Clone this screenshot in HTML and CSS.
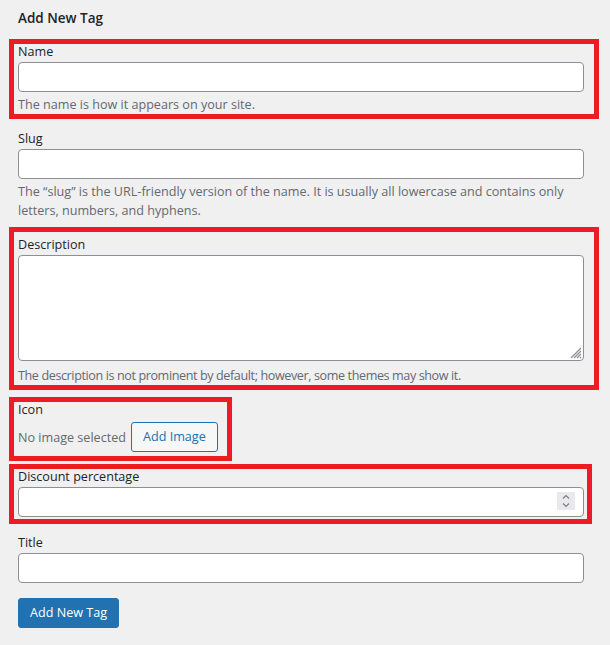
FILE: index.html
```html
<!DOCTYPE html>
<html lang="en">
<head>
<meta charset="utf-8">
<title>Add New Tag</title>
<link rel="stylesheet" href="styles.css">
</head>
<body>
<div class="form-wrap">
  <h2 class="form-title">Add New Tag</h2>
  <form class="tag-form">
    <div class="form-field mark mark-wide field-name">
      <label for="tag-name">Name</label>
      <input type="text" id="tag-name" class="text-input">
      <p class="description">The name is how it appears on your site.</p>
    </div>

    <div class="form-field field-slug">
      <label for="tag-slug">Slug</label>
      <input type="text" id="tag-slug" class="text-input">
      <p class="description">The “slug” is the URL-friendly version of the name. It is usually all lowercase and contains only letters, numbers, and hyphens.</p>
    </div>

    <div class="form-field mark mark-wide field-desc">
      <label for="tag-description">Description</label>
      <div class="textarea-wrap">
        <textarea id="tag-description" class="text-area"></textarea>
        <svg class="grip" width="14" height="14" viewBox="0 0 14 14" aria-hidden="true">
          <path d="M13 3 L3 13 M13 6 L6 13 M13 9 L9 13 M13 12 L12 13" stroke="#8c8f94" stroke-width="1.3" fill="none"/>
        </svg>
      </div>
      <p class="description description-desc">The description is not prominent by default; however, some themes may show it.</p>
    </div>

    <div class="form-field mark mark-icon field-icon">
      <label>Icon</label>
      <div class="image-row">
        <span class="no-image">No image selected</span>
        <button type="button" class="button button-secondary">Add Image</button>
      </div>
    </div>

    <div class="form-field mark mark-num field-discount">
      <label for="tag-discount">Discount percentage</label>
      <div class="number-wrap">
        <input type="text" id="tag-discount" class="text-input">
        <span class="spin" aria-hidden="true">
          <svg width="18" height="18" viewBox="0 0 18 18">
            <path d="M6 6.5 L9 3.5 L12 6.5 M6 11.5 L9 14.5 L12 11.5" stroke="#7a7a80" stroke-width="1.1" fill="none"/>
          </svg>
        </span>
      </div>
    </div>

    <div class="form-field field-title">
      <label for="tag-title">Title</label>
      <input type="text" id="tag-title" class="text-input">
    </div>

    <div class="submit-row">
      <button type="submit" class="button button-primary">Add New Tag</button>
    </div>
  </form>
</div>
</body>
</html>
```

FILE: styles.css
```css
html, body {
  margin: 0;
  padding: 0;
}

body {
  background: #f0f0f1;
  color: #1d2327;
  font-family: "Open Sans", "Noto Sans", sans-serif;
  font-size: 12.6px;
}

.form-wrap {
  padding: 8px 26px 20px 18px;
}

.form-title {
  margin: 0;
  font-size: 13.5px;
  font-weight: 600;
  line-height: 20px;
  color: #1d2327;
}

/* Fields */
.form-field label {
  display: block;
  line-height: 15px;
  margin-bottom: 3px;
  color: #1d2327;
}

.text-input {
  display: block;
  box-sizing: border-box;
  width: 100%;
  height: 30px;
  margin: 0;
  padding: 0 8px;
  background: #fff;
  border: 1px solid #8c8f94;
  border-radius: 4px;
  font: inherit;
  color: #2c3338;
}

.description {
  margin: 3px 0 0;
  line-height: 19px;
  color: #646970;
}

.textarea-wrap {
  position: relative;
}

.text-area {
  display: block;
  box-sizing: border-box;
  width: 100%;
  height: 106px;
  margin: 0;
  padding: 2px 6px;
  background: #fff;
  border: 1px solid #8c8f94;
  border-radius: 4px;
  resize: none;
  font: inherit;
}

.grip {
  position: absolute;
  right: 2px;
  bottom: 2px;
}

.description-desc {
  margin-top: 5px;
  letter-spacing: -0.4px;
}

/* Red highlight frames around selected fields */
.mark {
  border: 5px solid #ed1c24;
  margin-left: -9px;
  padding-left: 4px;
}

.mark-wide {
  margin-right: -15px;
  padding-right: 10px;
}

.mark-num {
  margin-right: -8px;
  padding-right: 3px;
}

.mark-icon {
  box-sizing: border-box;
  width: 223px;
  padding-right: 9px;
}

/* Vertical rhythm */
.field-name {
  margin-top: 11px;
}

.field-slug {
  margin-top: 12px;
}

.field-desc {
  margin-top: 7px;
  padding-top: 5px;
}

.field-icon {
  margin-top: 7px;
  padding-bottom: 4px;
}

.field-icon label {
  margin-bottom: 5px;
}

.field-discount {
  margin-top: 3px;
  padding-bottom: 2px;
}

.field-title {
  margin-top: 11px;
}

/* Icon picker row */
.image-row {
  display: flex;
  align-items: center;
  gap: 5px;
}

.no-image {
  color: #646970;
}

/* Number field spinner */
.number-wrap {
  position: relative;
}

.spin {
  position: absolute;
  top: 5px;
  right: 9px;
  width: 18px;
  height: 18px;
  background: #e9e9ed;
  display: block;
}

.spin svg {
  display: block;
}

/* Buttons */
.button {
  box-sizing: border-box;
  height: 30px;
  margin: 0;
  padding: 0 11px;
  border-radius: 3px;
  font: inherit;
  line-height: 28px;
  cursor: pointer;
}

.button-secondary {
  color: #2271b1;
  background: #f6f7f7;
  border: 1px solid #2271b1;
}

.button-primary {
  color: #fff;
  background: #2271b1;
  border: 1px solid #2271b1;
}

.submit-row {
  margin-top: 15px;
}
```
